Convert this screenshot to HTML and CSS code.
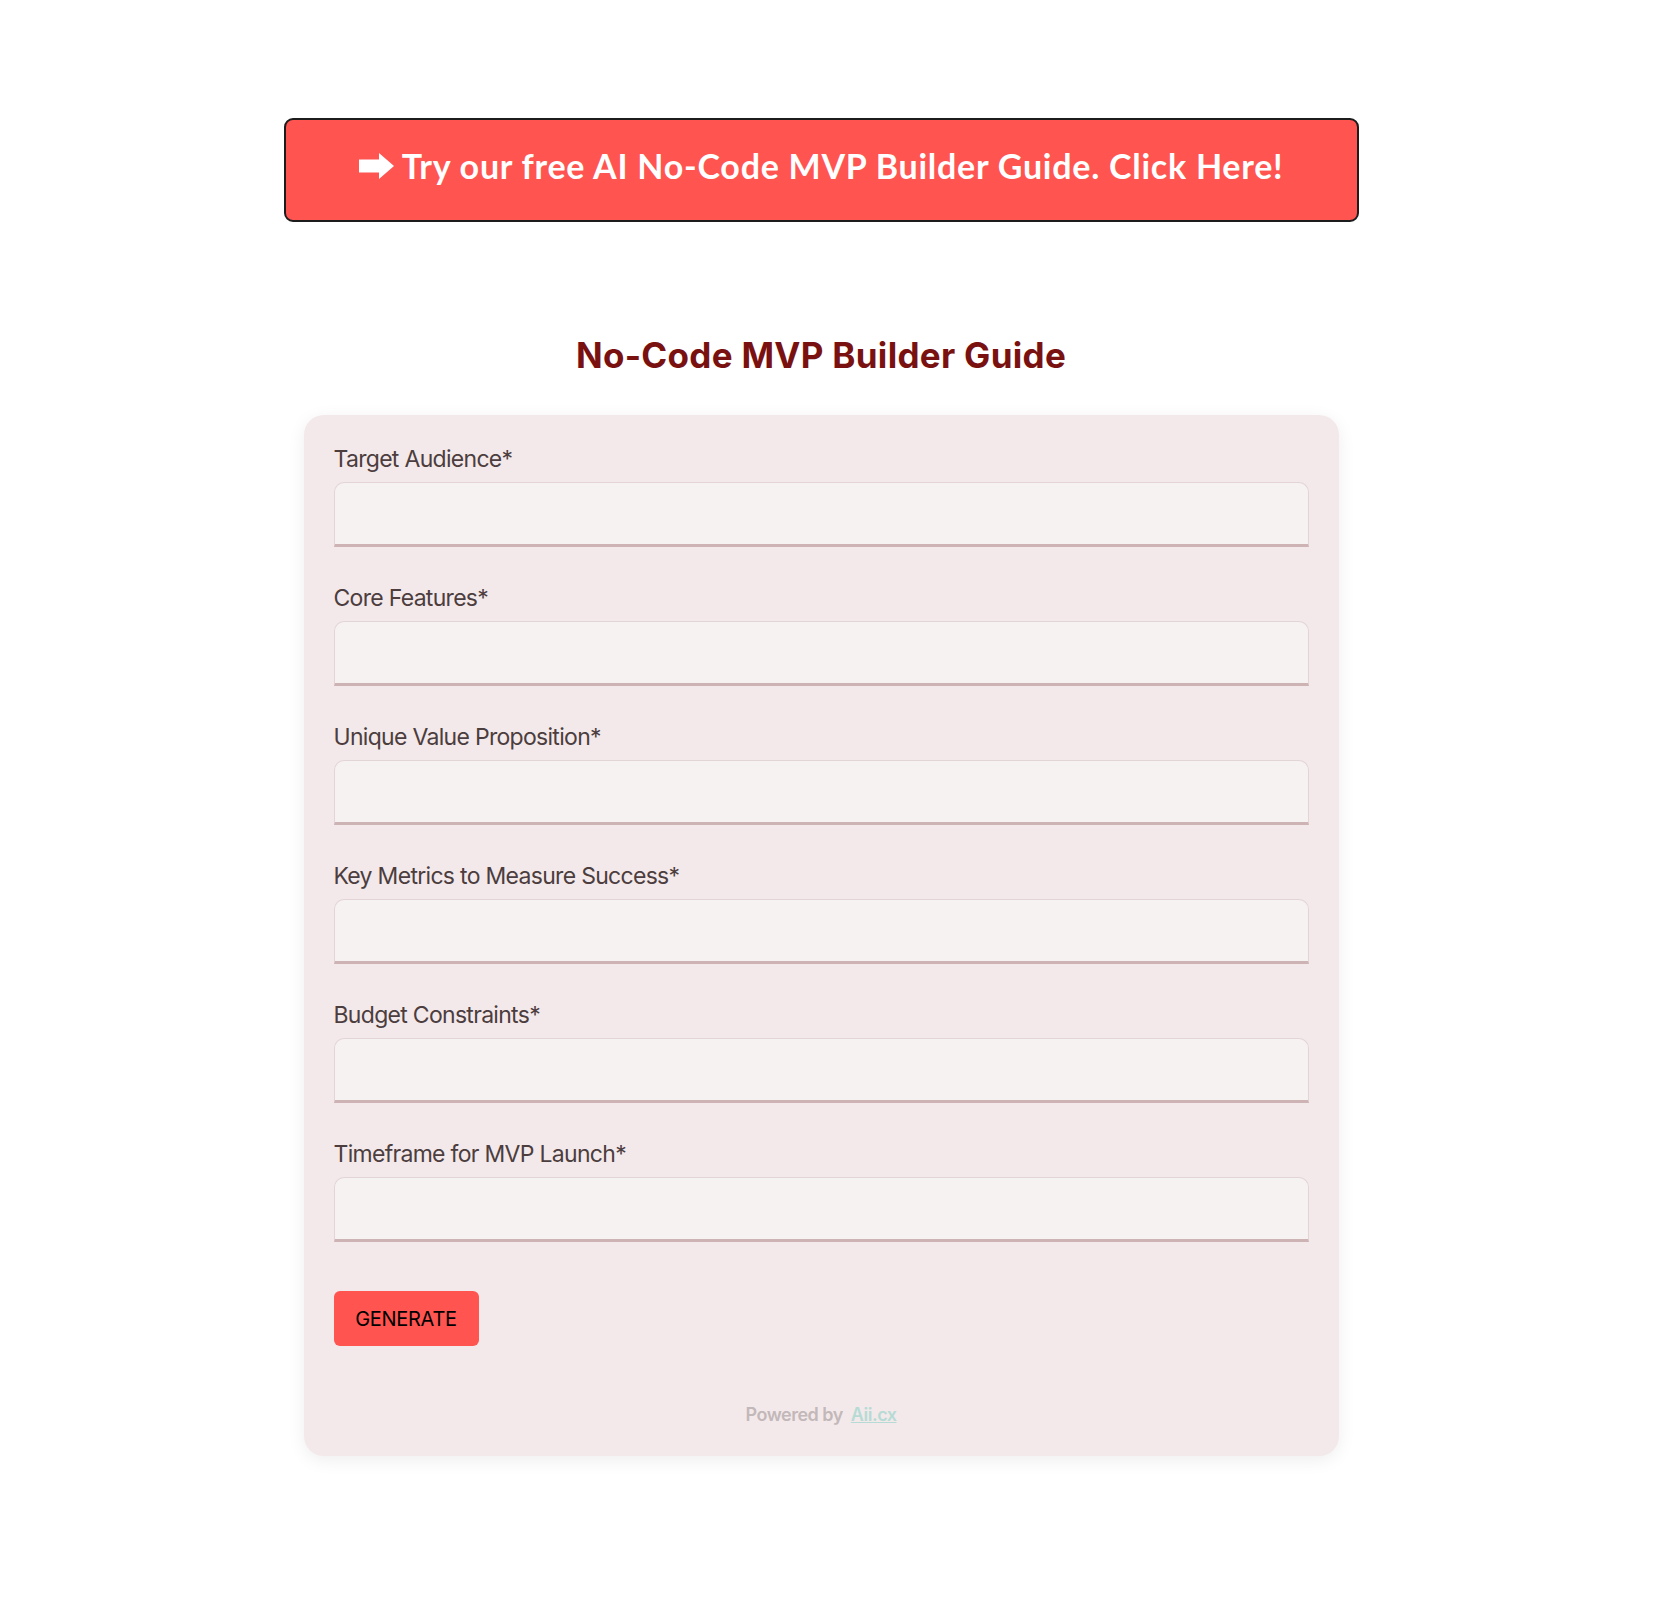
FILE: index.html
```html
<!DOCTYPE html>
<html lang="en">
<head>
<meta charset="utf-8">
<title>No-Code MVP Builder Guide</title>
<link rel="stylesheet" href="styles.css">
</head>
<body>
<div class="page">
  <a class="promo" href="#">
    <svg class="promo-arrow" width="35" height="26" viewBox="0 0 35 26" aria-hidden="true"><path d="M0 6.5H20V0L35 13L20 26V19.5H0Z" fill="#fff"/></svg>
    <span>Try our free AI No-Code MVP Builder Guide. Click Here!</span>
  </a>
  <h1 class="title">No-Code MVP Builder Guide</h1>
  <form class="card">
    <div class="field">
      <label>Target Audience*</label>
      <input type="text">
    </div>
    <div class="field">
      <label>Core Features*</label>
      <input type="text">
    </div>
    <div class="field">
      <label>Unique Value Proposition*</label>
      <input type="text">
    </div>
    <div class="field">
      <label>Key Metrics to Measure Success*</label>
      <input type="text">
    </div>
    <div class="field">
      <label>Budget Constraints*</label>
      <input type="text">
    </div>
    <div class="field">
      <label>Timeframe for MVP Launch*</label>
      <input type="text">
    </div>
    <button type="button" class="generate">GENERATE</button>
    <p class="powered">Powered by <a href="#">Aii.cx</a></p>
  </form>
</div>
</body>
</html>
```
FILE: styles.css
```css
* { box-sizing: border-box; }
html, body { margin: 0; padding: 0; background: #ffffff; }
body { font-family: Inter, "Liberation Sans", sans-serif; }

.page {
  width: 1642px;
  display: flex;
  flex-direction: column;
  align-items: center;
  padding-top: 118px;
  padding-bottom: 100px;
}

.promo {
  width: 1075px;
  height: 104px;
  padding-bottom: 9px;
  border: 2px solid #1c1c1c;
  border-radius: 9px;
  background: #ff5450;
  color: #ffffff;
  text-decoration: none;
  display: flex;
  align-items: center;
  justify-content: center;
  gap: 8px;
  font-family: Lato, "Open Sans", sans-serif;
  font-weight: 700;
  font-size: 34px;
  letter-spacing: 0.75px;
}
.promo-arrow { flex: none; }

.title {
  margin: 113px 0 40px;
  font-size: 35px;
  line-height: 40px;
  font-weight: 700;
  color: #7a1111;
  text-align: center;
  letter-spacing: 0.3px;
}

.card {
  width: 1035px;
  background: #f3e9ea;
  border-radius: 20px;
  box-shadow: 0 4px 18px rgba(0, 0, 0, 0.07);
  padding: 30px;
  display: flex;
  flex-direction: column;
}

.field {
  display: flex;
  flex-direction: column;
  margin-bottom: 37px;
}
.field label {
  font-size: 23px;
  line-height: 28px;
  color: #4c3d3e;
  letter-spacing: -0.7px;
  margin-bottom: 9px;
}
.field input {
  height: 65px;
  width: 100%;
  background: #f7f2f2;
  border: 1px solid #e3d4d6;
  border-bottom: 3px solid #cdb3b4;
  border-radius: 10px 10px 0 0;
  outline: none;
  font: inherit;
}

.generate {
  align-self: flex-start;
  margin-top: 12px;
  width: 145px;
  height: 55px;
  background: #ff5450;
  border: none;
  border-radius: 6px;
  color: #000000;
  font-family: Inter, sans-serif;
  font-size: 20px;
  letter-spacing: -0.3px;
}

.powered {
  margin: 58px 0 0;
  text-align: center;
  font-size: 18px;
  line-height: 22px;
  font-weight: 600;
  color: #c3b8b9;
  letter-spacing: -0.5px;
}
.powered a {
  color: #b6dbd5;
  margin-left: 4px;
}
```
